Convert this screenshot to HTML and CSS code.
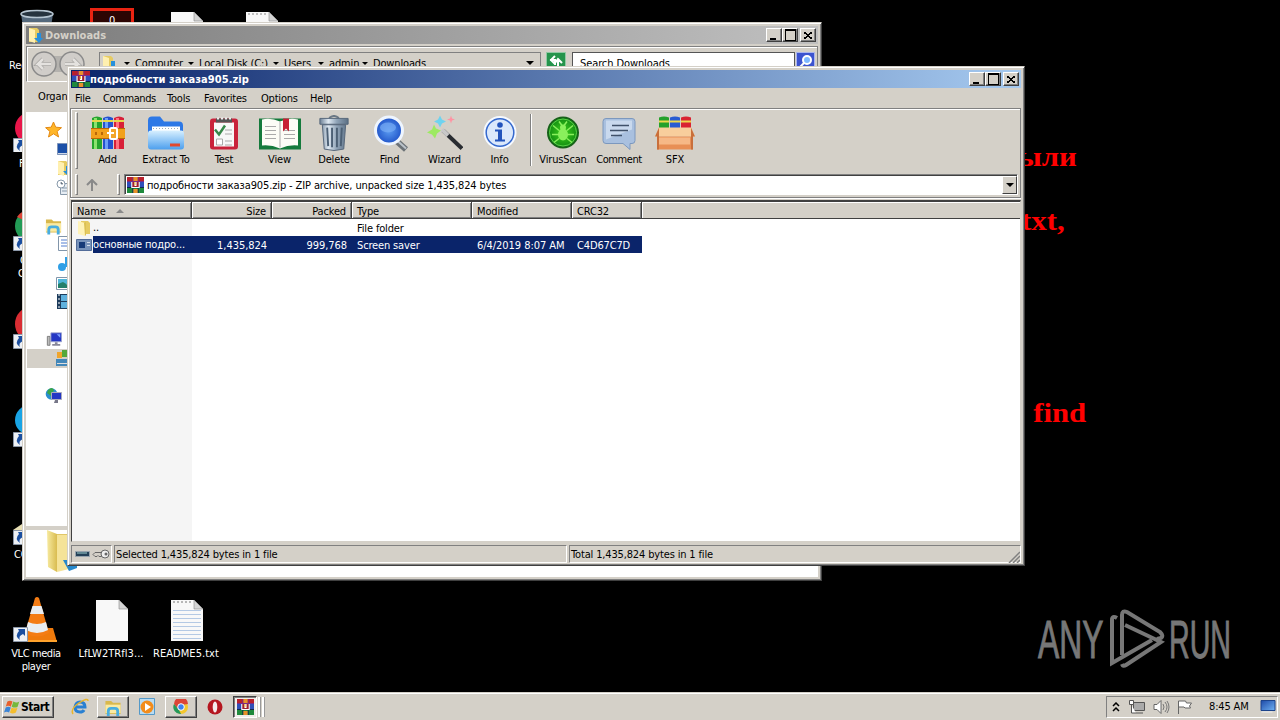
FILE: index.html
```html
<!DOCTYPE html>
<html lang="en">
<head>
<meta charset="utf-8">
<title>Desktop</title>
<link rel="stylesheet" href="styles.css">
</head>
<body>
<svg class="defs" aria-hidden="true">
<defs>
<linearGradient id="gBlue" x1="0" y1="0" x2="0" y2="1"><stop offset="0" stop-color="#d8f0ff"/><stop offset="1" stop-color="#4c9fee"/></linearGradient>
<linearGradient id="gSteel" x1="0" x2="1"><stop offset="0" stop-color="#6d8196"/><stop offset=".3" stop-color="#dfe9f2"/><stop offset=".6" stop-color="#8fa3b7"/><stop offset="1" stop-color="#5b6f84"/></linearGradient>
<linearGradient id="gFold" x1="0" x2="1"><stop offset="0" stop-color="#f7eaa0"/><stop offset="1" stop-color="#d9bc50"/></linearGradient>
<linearGradient id="gScr" x1="0" y1="0" x2="1" y2="1"><stop offset="0" stop-color="#1d4aa8"/><stop offset="1" stop-color="#6fb1f2"/></linearGradient>
<radialGradient id="gLens"><stop offset="0" stop-color="#5c9df2"/><stop offset="1" stop-color="#1f53c8"/></radialGradient>
<radialGradient id="gVirus"><stop offset="0" stop-color="#3fd21c"/><stop offset="1" stop-color="#118a12"/></radialGradient>
<symbol id="rar" viewBox="0 0 16 16"><path fill="#b8202c" d="M0 0h16v5H0z"/><path fill="#2f4fb8" d="M0 5h16v6H0z"/><path fill="#1f8a3c" d="M0 11h16v5H0z"/><path fill="#7a2a86" d="M5 0h1v5H5zM10 0h1v5h-1zM0 4h16v1H0z"/><path fill="#12264e" d="M5 5h1v11H5zM10 5h1v11h-1zM0 10h16v1H0z"/><path fill="#e8912a" d="M6 0h4v4H6zM6 12h4v4H6z"/><path fill="#fff" d="M4 5h8v6H4z"/><path fill="#a02030" d="M5 5h2v4h2V5h2v5H5z"/><path fill="#f0c040" d="M7 5h1v3H7z"/></symbol>
<symbol id="books" viewBox="0 0 34 34"><path fill="#25a52e" d="M1 2q5-3 10 0v31H1z"/><path fill="#2452cf" d="M12 2q5-3 10 0v31H12z"/><path fill="#d82038" d="M23 2q5-3 10 0v31H23z"/><path fill="#8be36f" d="M3 2h3v31H3z"/><path fill="#6da0f6" d="M14 2h3v31h-3z"/><path fill="#ff7180" d="M25 2h3v31h-3z"/><path fill="#e6d64a" d="M1 4h10v2H1zM12 4h10v2H12zM23 4h10v2H23z"/><path fill="#f2a11c" d="M0 12h34v11H0z"/><path fill="#b86708" d="M0 12h34v1H0zM0 22h34v1H0zM4 16h2v3H4zM10 16h2v3h-2z"/><rect x="19" y="12" width="7" height="11" rx="1.500" fill="#f3a52a" stroke="#fff" stroke-width="2"/><path fill="#fff" d="M16 16h7v2h-7z"/></symbol>
<symbol id="folder" viewBox="0 0 16 16"><path fill="#e6cb62" d="M5 1h7l2 2v11H5z"/><path fill="#fff3b8" d="M2 1l7 2v13l-7-2z"/><path fill="#dcc154" d="M8 3l2-1v13l-1 1z"/></symbol>
<symbol id="dlfolder" viewBox="0 0 16 16"><path fill="#e6cb62" d="M1 1h8l2 2v12H1z"/><path fill="#fff0b0" d="M1 1l6 2v13l-6-2z"/><path fill="#2790dc" d="M9 6h4v5h2l-4 5-5-5h3z"/></symbol>
<symbol id="winflag" viewBox="0 0 20 18"><path fill="#e8602b" d="M4 2q3-2 6 0L8 8Q5 6 2 8z"/><path fill="#76b83b" d="M11 2q4 2 7 0l-2 6q-3 2-7 0z"/><path fill="#3b85d6" d="M2 9q3-2 6 0l-2 6q-3-2-6 0z"/><path fill="#f4bd2d" d="M9 9q4 2 7 0l-2 6q-4 2-7 0z"/></symbol>
<symbol id="shortcut" viewBox="0 0 15 15"><path fill="#eef1f5" stroke="#8b97a8" d="M.5.5h14v14H.5z"/><path fill="#1b4fa0" d="M5 2h7v7l-2-2q-5 2-3 6-6-4-1-9z"/></symbol>
<symbol id="libs" viewBox="0 0 18 18"><path fill="#d9b84c" d="M1 2h6l2 2h8v12H1z"/><path fill="#faeaa2" d="M1 6h16v9H1z"/><path fill="none" stroke="#48ade0" stroke-width="3" d="M4 18v-5q0-3 3-3h4q3 0 3 3v5"/></symbol>
<symbol id="doc" viewBox="0 0 32 42"><path fill="#f8f8f8" d="M0 0h23l9 9v32H0z"/><path fill="#d4d4d4" stroke="#888" stroke-width=".6" d="M23 0v9h9z"/></symbol>
<symbol id="monitor" viewBox="0 0 18 16"><path fill="#bbb" stroke="#777" d="M1.500 4.500h3v10h-3z"/><path fill="#2336c4" stroke="#9ea5cc" d="M5.500.5h12v10h-12z"/><path fill="#889" d="M10 11h3v2h3v2H7v-2h3z"/><path fill="#7da0ff" d="M12 2h4v4z"/></symbol>
</defs>
</svg>

<main class="desktop">
  <svg class="at bin" width="36" height="30" viewBox="0 0 36 30"><path fill="#55697c" d="M2 5h32l-4 25H6z"/><ellipse cx="18" cy="5" rx="16" ry="3.500" fill="#27343f" stroke="#b7c6d2" stroke-width="1.500"/></svg>
  <div class="at redbox">0</div>
  <svg class="at doc-a" width="32" height="42"><use href="#doc"/></svg>
  <svg class="at doc-b" width="32" height="42"><use href="#doc"/><path stroke="#888" stroke-dasharray="2 2" d="M2 2h20"/></svg>
  <span class="at lbl l-re">Recycle Bin</span>
  <svg class="at" style="left:13px;top:108px" width="30" height="44"><circle cx="18" cy="20" r="16" fill="#e8164a"/><use href="#shortcut" y="30" width="15" height="15"/></svg>
  <span class="at lbl l-f">Firefox</span>
  <svg class="at" style="left:13px;top:206px" width="30" height="46"><circle cx="18" cy="20" r="16" fill="#239b56"/><path fill="#dd4538" d="M4 11Q9 3 19 4v14z"/><use href="#shortcut" y="30" width="15" height="15"/></svg>
  <span class="at lbl l-g">Google<br>Chrome</span>
  <svg class="at" style="left:13px;top:304px" width="30" height="46"><ellipse cx="18" cy="20" rx="16" ry="17" fill="#d92d33"/><use href="#shortcut" y="30" width="15" height="15"/></svg>
  <svg class="at" style="left:13px;top:401px" width="30" height="48"><circle cx="17" cy="19" r="15" fill="#19a4e5"/><use href="#shortcut" y="31" width="15" height="15"/></svg>
  <svg class="at" style="left:13px;top:499px" width="30" height="48"><path fill="#e8dfb4" d="M0 31l12-8v10z"/><use href="#shortcut" y="31" width="15" height="15"/></svg>
  <span class="at lbl l-c">CCleaner</span>

  <svg class="at" style="left:13px;top:595px" width="46" height="50" viewBox="0 0 46 50"><path fill="#ef7a0c" d="M10 33h30l4 14H8z"/><path fill="#ffa22c" d="M8 45h36v2H8z"/><path fill="#f47c14" d="M22 3q2-2 4 0l10 35q-12 7-24 0z"/><path fill="#e9edf1" d="M19.500 11h9l2.500 8H17zM15 27q9 4 18 0l2 8q-11 6-22 0z"/><use href="#shortcut" y="32" width="15" height="15"/></svg>
  <span class="at lbl l-vlc">VLC media<br>player</span>
  <svg class="at" style="left:96px;top:600px" width="32" height="42"><use href="#doc"/></svg>
  <span class="at lbl l-lf">LfLW2TRfl3...</span>
  <svg class="at" style="left:171px;top:600px" width="32" height="42"><use href="#doc"/><path stroke="#777" stroke-dasharray="2 2" d="M2 2h20"/><path stroke="#b4c9e4" d="M2 10.500h28M2 14.500h28M2 18.500h28M2 22.500h28M2 26.500h28M2 30.500h28M2 34.500h28M2 38.500h28"/></svg>
  <span class="at lbl l-rd">README5.txt</span>

  <b class="at wall w1">были</b>
  <b class="at wall w2">txt,</b>
  <b class="at wall w3">find</b>

  <div class="at brand"><span class="any">ANY</span><svg width="56" height="64" viewBox="0 0 56 64" fill="none" stroke="#777" stroke-width="4"><path d="M8 10Q3 7 3 12v43l40-23"/><path d="M13 47V7q0-5 5-3l33 20q4 4 1 6l-4 1M16 17l36 17-35 23q-3 2-4-1"/></svg><span class="run">RUN</span></div>

  <section class="window back">
    <header class="title inactive"><svg width="16" height="16"><use href="#dlfolder"/></svg><b>Downloads</b>
      <span class="ctl"><i class="min"></i><i class="max"></i><i class="cls"></i></span></header>
    <div class="nav">
      <svg class="arrows" width="58" height="28" viewBox="0 0 58 28"><rect x="14" y="6" width="30" height="16" fill="#b4b2ae"/><g fill="#d0cdc9" stroke="#8a8a8a" stroke-width="1.500"><circle cx="14" cy="14" r="12"/><circle cx="42" cy="14" r="12"/></g><path fill="none" stroke="#a8a6a3" stroke-width="4" d="M21 14H8l5-5m-5 5l5 5M35 14h13l-5-5m5 5l-5 5"/><path fill="none" stroke="#e4e2df" stroke-width="2.500" d="M21 14H8l5-5m-5 5l5 5M35 14h13l-5-5m5 5l-5 5"/></svg>
      <div class="crumbs"><svg width="16" height="16"><use href="#dlfolder"/></svg><i class="dn"></i><span class="c1">Computer</span><i class="dn"></i><span class="c2">Local Disk (C:)</span><i class="dn"></i><span class="c3">Users</span><i class="dn"></i><span class="c4">admin</span><i class="dn"></i><span class="c5">Downloads</span><i class="dn last"></i></div>
      <svg class="refresh" width="20" height="20"><path fill="#25944c" stroke="#8fc9a3" d="M.5.5h19v19H.5z"/><path stroke="#fff" stroke-width="2" fill="none" d="M9 4L5 8l4 4M4 8h5v5M12 14V8m-3 3l3-4 4 4"/></svg>
      <div class="search">Search Downloads</div>
      <svg width="19" height="20"><path fill="#3c53cf" stroke="#a9b4ef" d="M.5.5h18v19H.5z"/><circle cx="11" cy="8" r="4" fill="#7fb8ff" stroke="#fff" stroke-width="2"/><path stroke="#fff" stroke-width="2" d="M8 11l-4 4"/></svg>
    </div>
    <div class="organize">Organize</div>
    <div class="tree">
      <svg width="40" height="414" viewBox="27 112 40 414">
        <path fill="#ffb629" stroke="#e48a14" d="M53.500 122l2.200 5.200 5.800.5-4.400 3.700 1.500 5.600-5.100-3.200-5 3.200 1.400-5.600-4.300-3.700 5.600-.5z"/>
        <path fill="#1c50a8" stroke="#7d93b8" d="M57.500 143.500h14v11h-14z"/><path stroke="#cfd9e8" d="M58 153.500h14"/>
        <use href="#dlfolder" x="57" y="160" width="16" height="16"/>
        <path fill="#e6edf4" stroke="#8799aa" d="M60.500 183.500h12v11h-12z"/><circle cx="61" cy="184" r="4" fill="#fff" stroke="#8799aa"/><path stroke="#8799aa" d="M61 182v2h2M62 188h5M62 191h5"/>
        <use href="#libs" x="45" y="217" width="17" height="18"/>
        <path fill="#fff" stroke="#8195aa" d="M58.500 236.500h12v14h-12z"/><path stroke="#557fd0" d="M61 240h6M61 243h6M61 246h6"/>
        <circle cx="62" cy="267" r="4" fill="#2f9fe6"/><path stroke="#2f9fe6" stroke-width="2" d="M66 257v10"/>
        <path fill="#fff" stroke="#8195aa" d="M56.500 277.500h14v12h-14z"/><path fill="#4fb6d8" d="M58 279h10v5H58z"/><path fill="#24806a" d="M58 284l5-2 5 3v3H58z"/>
        <path fill="#1d3c5c" d="M57 294h14v15H57z"/><path fill="#5fb1dd" d="M61 295h8v6h-8zM61 302h8v6h-8z"/><path stroke="#fff" stroke-dasharray="2 2" d="M59 294v15"/>
        <use href="#monitor" x="46" y="332" width="16" height="15"/>
        <path fill="#d4d0c8" d="M27 349h40v19H27z"/><path fill="#4387b9" d="M56 359h11v7H56z"/><path fill="#f0a52c" d="M57 352h5v6h-5z"/><path fill="#54a83c" d="M62 350h5v7h-5z"/><path fill="#ddd" d="M57 363h10v1H57z"/>
        <circle cx="51.500" cy="394" r="5.800" fill="#2a8ed0"/><path fill="#3aa54a" d="M48 390q4-4 6 0l-3 6-4-3z"/><path fill="#2336c4" stroke="#aab" d="M51.500 392.500h10v7h-10z"/><path fill="#778" d="M55 400h3v3h-4z"/>
      </svg>
    </div>
    <div class="details"><svg width="50" height="46" viewBox="0 0 50 46"><path fill="#e0c667" d="M26 4h24v34H30z"/><path fill="url(#gFold)" d="M20 0l10 4v38l-9-5z"/><path fill="#f5e398" d="M30 5h12v34l-12 3z"/><path fill="#2688cc" d="M36 30h14v8l-8 3z"/></svg></div>
  </section>

  <section class="window front">
    <header class="title active"><svg width="18" height="16" viewBox="0 0 16 16" preserveAspectRatio="none"><use href="#rar"/></svg><b>подробности заказа905.zip</b>
      <span class="ctl"><i class="min"></i><i class="max"></i><i class="cls"></i></span></header>
    <nav class="menu"><span style="width:28px">File</span><span class="tight" style="width:64px">Commands</span><span style="width:37px">Tools</span><span style="width:57px">Favorites</span><span style="width:49px">Options</span><span>Help</span></nav>
    <div class="bars">
      <div class="tools">
        <i class="grip"></i>
        <div class="tool" style="width:59px"><svg width="36" height="36"><use href="#books" x="1" y="1" width="34" height="34"/></svg><span>Add</span></div>
        <div class="tool" style="width:58px"><svg width="38" height="36" viewBox="0 0 38 36"><path fill="#2d78e6" d="M1 5q0-4 4-4h8l4 5h15q4 0 4 4v20H1z"/><path fill="#fff" d="M5 11h28v8H5z"/><path stroke="#9ab" stroke-dasharray="1 2" d="M6 13h26"/><rect x="1" y="15" width="36" height="19" rx="3" fill="url(#gBlue)"/><path fill="#e2482e" d="M23 28h10v3H23z"/></svg><span>Extract To</span></div>
        <div class="tool" style="width:58px"><svg width="30" height="36" viewBox="0 0 30 36"><rect x="1" y="3" width="28" height="31" rx="3" fill="#c9233b"/><path fill="#f8f8f8" d="M5 7h20v24H5z"/><path fill="#555" d="M7 3h16v4H7z"/><path stroke="#eee" stroke-dasharray="2 2" stroke-width="2" d="M8 3h15"/><path fill="none" stroke="#37884a" stroke-width="2.500" d="M6 14l4 5 6-9"/><path stroke="#aaa" d="M16 14.500h7M16 18.500h7M16 25.500h7M16 29.500h7"/><path fill="#fff" stroke="#aaa" d="M7.500 23.500h6v6h-6z"/></svg><span>Test</span></div>
        <div class="tool" style="width:53px"><svg width="44" height="36" viewBox="0 0 44 36"><path fill="#157a3c" d="M1 3h42v31H1z"/><path fill="#fcfcf6" d="M4 4q9-2 18 2 9-4 18-2v26q-9-1-18 3-9-4-18-3z"/><path stroke="#aaa" d="M22 6v26M7 11h11M7 15h11M7 19h11M7 23h11M26 19h11M26 23h11M26 15h11"/><path fill="#c71f35" d="M25 3h6v13l-3-3-3 3z"/></svg><span>View</span></div>
        <div class="tool" style="width:56px"><svg width="32" height="38" viewBox="0 0 32 38"><path fill="none" stroke="#6a7885" stroke-width="2" d="M11 3q5-4 10 0"/><path fill="url(#gSteel)" stroke="#56677a" d="M1.500 3.500h29v6h-29zM4 10h24l-2 25q-10 3-20 0z"/><path stroke="#4c6075" stroke-width="2" d="M9 13l1 19M14 13v20M19 13v20M24 13l-1 19"/></svg><span>Delete</span></div>
        <div class="tool" style="width:55px"><svg width="38" height="36" viewBox="0 0 38 36"><path stroke="#6c7277" stroke-width="6" d="M25 25l10 9"/><path stroke="#bbc3ca" stroke-width="2" d="M25 24l10 9"/><circle cx="18" cy="15" r="13.500" fill="url(#gLens)" stroke="#eef5ff" stroke-width="3"/><ellipse cx="17" cy="12" rx="8" ry="5" fill="#78adf5" opacity=".7"/></svg><span>Find</span></div>
        <div class="tool" style="width:55px"><svg width="36" height="36" viewBox="0 0 36 36"><path stroke="#292c31" stroke-width="4" d="M16 15l19 18"/><path stroke="#c8c8c8" stroke-width="4" d="M15 14l6 6"/><path fill="#9dea62" d="M7 9l2 4 5 2-4 3-2 5-3-4-5-2 5-3z"/><path fill="#6ed3f0" d="M13 0l2 4 4 2-4 2-2 4-2-4-4-2 4-2z"/><path fill="#ff93a3" d="M24 0l1 3 3 1-3 1-1 3-1-3-3-1 3-1z"/></svg><span>Wizard</span></div>
        <div class="tool info" style="width:55px"><svg width="36" height="36" viewBox="0 0 36 36"><circle cx="18" cy="17" r="15.500" fill="#e7effb" stroke="#f5f9ff" stroke-width="2"/><circle cx="18" cy="17" r="13.800" fill="#dbe8fb" stroke="#3569ce" stroke-width="1.500"/><circle cx="18" cy="9.500" r="2.800" fill="#2253bc"/><path fill="#2253bc" d="M13 14h7v10h3v2H13v-2h3v-8h-3z"/></svg><span>Info</span></div>
        <i class="split"></i>
        <div class="tool" style="width:60px"><svg width="34" height="36" viewBox="0 0 34 36"><circle cx="17" cy="17" r="15" fill="url(#gVirus)" stroke="#176219" stroke-width="2"/><circle cx="17" cy="17" r="13.500" fill="none" stroke="#58d247"/><ellipse cx="17" cy="19" rx="5" ry="6" fill="#89f05c"/><circle cx="17" cy="12" r="3" fill="#89f05c"/><path fill="none" stroke="#89f05c" stroke-width="1.500" d="M7 10l6 5M27 10l-6 5M6 19h22M8 27l5-4M26 27l-5-4M13 6l3 4M21 6l-3 4"/></svg><span>VirusScan</span></div>
        <div class="tool" style="width:52px"><svg width="34" height="36" viewBox="0 0 34 36"><path fill="#a9c0df" stroke="#7c98be" d="M4 3h26q3 0 3 3v19q0 3-3 3h-2v6l-7-6H4q-3 0-3-3V6q0-3 3-3z"/><path fill="#c9d9ee" d="M4 5h26v9L4 24z"/><path stroke="#40516a" stroke-width="1.500" d="M10 10h17M8 15h18M9 20h11"/></svg><span class="tight">Comment</span></div>
        <div class="tool" style="width:60px"><svg width="42" height="36" viewBox="0 0 42 36"><path fill="#24a12b" d="M5 2q5-2 10 0v16H5z"/><path fill="#285bd2" d="M16 2q5-2 10 0v16H16z"/><path fill="#d92332" d="M27 2q5-2 10 0v16H27z"/><path fill="#eed84c" d="M5 5h10v2H5zM16 5h10v2H16zM27 5h10v2H27z"/><path fill="#f8ce9c" d="M5 12h32l4 9H1z"/><path fill="#e88f55" d="M3 21h36v13H3z"/><path fill="#c96f3b" d="M5 12L1 21h2v13h2zM37 12l4 9h-2v13h-2z"/><path fill="#f6b886" d="M5 22h31v7H5z"/></svg><span>SFX</span></div>
      </div>
      <div class="addr">
        <i class="grip"></i>
        <svg class="up" width="14" height="12" viewBox="0 0 14 12"><path fill="none" stroke="#898989" stroke-width="2" d="M7 12V2M2 6l5-5 5 5"/></svg>
        <i class="grip"></i>
        <div class="path"><svg width="17" height="16" viewBox="0 0 16 16" preserveAspectRatio="none"><use href="#rar"/></svg><span>подробности заказа905.zip - ZIP archive, unpacked size 1,435,824 bytes</span><i class="drop"></i></div>
      </div>
    </div>
    <div class="list">
      <div class="row head"><span>Name<svg width="8" height="4"><path fill="#8a8a8a" d="M0 4l4-4 4 4z"/></svg></span><span class="r">Size</span><span class="r">Packed</span><span>Type</span><span>Modified</span><span>CRC32</span><span></span></div>
      <div class="row"><span><svg width="16" height="16"><use href="#folder"/></svg>..</span><span></span><span></span><span>File folder</span></div>
      <div class="row sel"><span class="nm"><svg width="16" height="14"><path fill="#7893ba" stroke="#526c99" d="M.5 1.500h15v11H.5z"/><path fill="#173b78" d="M3 4h6v6H3z"/><path stroke="#d3ddeb" d="M11 4.500h3M11 7.500h3"/></svg><em>основные подро...</em></span><span class="r num">1,435,824</span><span class="r num">999,768</span><span>Screen saver</span><span class="num">6/4/2019 8:07 AM</span><span>C4D67C7D</span></div>
      <div class="shade"></div>
    </div>
    <footer class="status"><div class="s0"><svg width="36" height="12" viewBox="0 0 36 12"><path fill="#244158" stroke="#99a4ae" d="M.5 3.500h14v5H.5z"/><path stroke="#9fd0d0" d="M2 5h10"/><path fill="none" stroke="#666" d="M27 4.500h-7l-2 2 2 2h2l1-1 1 1h3"/><circle cx="30" cy="6" r="4" fill="#eee" stroke="#666"/><circle cx="31" cy="6" r="1.500" fill="#666"/></svg></div><div class="s1">Selected 1,435,824 bytes in 1 file</div><div class="s2">Total 1,435,824 bytes in 1 file<svg width="12" height="12"><path stroke="#808080" stroke-width="1.500" d="M1 12L12 1M5 12l7-7M9 12l3-3"/></svg></div></footer>
  </section>
</main>

<footer class="taskbar">
  <div class="start"><svg width="17" height="17" viewBox="0 0 20 18"><use href="#winflag"/></svg><b>Start</b></div>
  <svg class="ie" width="18" height="18" viewBox="0 0 18 18"><path fill="none" stroke="#2a80d2" stroke-width="3" d="M4 9h10q0-5-5-5-4 0-5 5 0 5 5 5 3 0 4-2"/><path fill="none" stroke="#e9b52c" stroke-width="1.500" d="M2 16Q-1 11 8 5t9-2"/></svg>
  <div class="task"><svg width="18" height="17"><use href="#libs"/></svg></div>
  <svg class="wmp" width="17" height="18" viewBox="0 0 17 18"><path fill="#b9dcf3" stroke="#5499c8" d="M.5.5h15v16H.5z"/><circle cx="8" cy="9" r="6.500" fill="#f28c1b"/><path fill="#fff" d="M6 5l6 4-6 4z"/></svg>
  <div class="task"><svg width="16" height="16" viewBox="0 0 16 16"><circle cx="8" cy="8" r="7" fill="#f4c72d"/><path fill="#dc4437" d="M1 5a7 7 0 0 1 14 0l-7 1-3 4z"/><path fill="#24985a" d="M1 5l5 6 2 4A7 7 0 0 1 1 5z"/><circle cx="8" cy="8" r="3.300" fill="#3e82f0" stroke="#fff"/></svg></div>
  <svg class="opera" width="16" height="16" viewBox="0 0 16 16"><circle cx="8" cy="8" r="7.500" fill="#b5161f"/><ellipse cx="8" cy="8" rx="2.300" ry="5.500" fill="#f5eaea"/></svg>
  <div class="task on"><svg width="17" height="16" viewBox="0 0 16 16" preserveAspectRatio="none"><use href="#rar"/></svg></div><i class="tick"></i><i class="tick"></i>
  <div class="tray">
    <svg width="8" height="10" viewBox="0 0 8 10"><path fill="none" stroke="#000" stroke-width="1.500" d="M1 4l3-3 3 3M1 9l3-3 3 3"/></svg>
    <svg class="net" width="16" height="15" viewBox="0 0 16 15"><path fill="#aaa" stroke="#555" d="M4.500 3.500h11v8h-11zM7 14h7"/><path fill="#fff" stroke="#555" d="M.5 1.500h4v4h-4zM2.500 6v8H7"/></svg>
    <svg class="vol" width="17" height="14" viewBox="0 0 17 14"><path fill="#fff" stroke="#666" d="M1 4.500h3l4-4v13l-4-4H1z"/><path fill="none" stroke="#777" d="M10 4q2 3 0 6M12 2q4 5 0 10M14 1q4 6 0 12"/></svg>
    <svg class="flag" width="16" height="14" viewBox="0 0 16 14"><path fill="#fff" stroke="#666" d="M1.500 14V1h7l1 2h5l-2 3 1 2H8L7 7H2"/></svg>
    <span class="clock">8:45 AM</span>
    <svg class="show" width="16" height="13" viewBox="0 0 15 13"><path fill="url(#gScr)" stroke="#1c438b" d="M.5.5h14v10H.5z"/><path stroke="#eee" d="M1 12h11"/></svg>
  </div>
</footer>
</body>
</html>
```
FILE: styles.css
```css
* { box-sizing: border-box; }
body { margin: 0; width: 1280px; height: 720px; overflow: hidden; background: #000; color: #000; font: 11px/13px "DejaVu Sans Condensed", "DejaVu Sans", sans-serif; letter-spacing: -0.15px; display: flex; flex-direction: column; white-space: nowrap; }
svg { display: block; flex: none; }
.defs { position: absolute; width: 0; height: 0; }
.desktop { position: relative; flex: 1; overflow: hidden; }
.at { position: absolute; }
.lbl { color: #fff; text-align: center; }
.tight { letter-spacing: -0.4px; }
.num { letter-spacing: -0.05px; }
.bin { left: 19px; top: 9px; }
.redbox { left: 90px; top: 8px; width: 44px; height: 40px; border: 3px solid #e92412; background: #2c0503; color: #fff; text-align: center; line-height: 19px; }
.doc-a { left: 171px; top: 12px; }
.doc-b { left: 246px; top: 12px; }
.l-re { left: 9px; top: 59px; }
.l-f { left: 19px; top: 157px; }
.l-g { left: 18px; top: 254px; }
.l-c { left: 14px; top: 548px; }
.l-vlc { left: 0; top: 647px; width: 72px; letter-spacing: -0.4px; }
.l-lf { left: 72px; top: 647px; width: 78px; letter-spacing: 0.05px; }
.l-rd { left: 147px; top: 647px; width: 78px; letter-spacing: 0.05px; }
.wall { color: #f00; font: bold 28px/32px "Liberation Serif", serif; letter-spacing: 0; transform: scaleX(1.1); transform-origin: 100% 50%; }
.w1 { right: 203px; top: 141px; }
.w2 { right: 215px; top: 205px; }
.w3 { right: 194px; top: 397px; }
.brand { left: 1038px; top: 608px; display: flex; align-items: center; color: #777; font: 53px/64px "Liberation Sans", sans-serif; letter-spacing: 0; -webkit-text-stroke: 1px #777; }
.brand span { display: block; width: 70px; transform-origin: 0 50%; transform: scaleX(.6); }
.brand svg { margin-left: 1px; }
.brand .run { margin-left: 4px; transform: scaleX(.54); }

.window { position: absolute; background: #d4d0c8; border: 1px solid; border-color: #d4d0c8 #404040 #404040 #d4d0c8; box-shadow: inset 1px 1px #fff, inset -1px -1px #808080; padding: 3px; display: flex; flex-direction: column; }
.back { left: 22px; top: 22px; width: 800px; height: 559px; }
.front { left: 67px; top: 66px; width: 958px; height: 500px; padding-bottom: 2px; }
.title { height: 18px; flex: none; display: flex; align-items: center; gap: 1px; padding: 0 2px; font-size: 11px; letter-spacing: 0; }
.active { gap: 0; padding-left: 1px; letter-spacing: 0.08px; }
.inactive { background: linear-gradient(90deg, #7c7c7c, #c0c0c0); color: #d4d0c8; }
.active { background: linear-gradient(90deg, #0a246a, #a6caf0); color: #fff; }
.ctl { margin-left: auto; display: flex; }
.ctl i { width: 16px; height: 14px; background: #d4d0c8; border: 1px solid; border-color: #fff #404040 #404040 #fff; box-shadow: inset -1px -1px #808080; display: grid; place-items: center; }
.ctl i::before { content: ""; width: 8px; height: 9px; }
.ctl .min::before { width: 6px; height: 2px; background: #000; margin: 7px 3px 0 0; }
.ctl .max::before { border: 1px solid #000; border-top-width: 2px; width: 9px; height: 9px; }
.ctl .cls { margin-left: 2px; }
.ctl .cls::before { width: 8px; height: 7px; background: linear-gradient(41deg, transparent 42%, #000 42% 58%, transparent 58%), linear-gradient(-41deg, transparent 42%, #000 42% 58%, transparent 58%); }

.nav { height: 36px; flex: none; margin-top: 2px; padding: 5px 1px 0 3px; border: 1px solid #808080; border-bottom-color: #fff; box-shadow: inset 1px 1px #fff; display: flex; align-items: flex-start; }
.arrows { margin-top: -2px; }
.crumbs { width: 442px; height: 22px; margin-left: 11px; padding-left: 2px; border: 1px solid #808080; display: flex; align-items: center; }
.dn { border: 3px solid transparent; border-top-color: #000; border-bottom: 0; margin-right: 5px; }
.dn.last { margin-left: auto; margin-right: 6px; border-width: 4px 4px 0; }
.crumbs svg + .dn { margin-left: 6px; }
.c1 { width: 53px; }
.c2 { width: 74px; }
.c3 { width: 34px; }
.c4 { width: 33px; }
.refresh { margin-left: 5px; }
.search { width: 223px; height: 22px; margin: 0 1px 0 6px; border: 1px solid #555; background: #fff; padding: 4px 7px; letter-spacing: -0.1px; }
.organize { height: 30px; flex: none; width: 41px; overflow: hidden; padding: 8px 0 0 12px; }
.tree { height: 414px; flex: none; background: #fff; padding-left: 1px; overflow: hidden; }
.details { flex: 1; border-top: 4px solid #d4d0c8; background: #fff; padding-left: 1px; }

.menu { height: 20px; flex: none; display: flex; align-items: center; padding: 0 4px; letter-spacing: -0.2px; }
.bars { height: 90px; flex: none; border: 1px solid #808080; box-shadow: inset 1px 1px #fff, 0 1px #fff; margin-left: -1px; }
.tools { display: flex; height: 62px; padding: 3px 0 0 4px; }
.grip { width: 3px; border: 1px solid; border-color: #fff #808080 #808080 #fff; flex: none; }
.tools .grip { height: 57px; }
.tool { display: flex; flex-direction: column; align-items: center; padding-top: 3px; }
.tool svg { height: 37px; }
.tool span { margin-top: 1px; }
.split { width: 2px; height: 52px; border-left: 1px solid #808080; border-right: 1px solid #fff; margin: 2px 1px 0 3px; }
.addr { display: flex; align-items: center; height: 23px; padding-left: 4px; padding-right: 2px; margin-top: 2px; }
.addr .grip { height: 21px; }
.up { margin: 0 18px 0 7px; }
.path { flex: 1; height: 21px; margin-left: 4px; background: #fff; border: 1px solid; border-color: #808080 #fff #fff #808080; box-shadow: inset 1px 1px #404040; display: flex; align-items: center; padding: 0 0 0 2px; }
.path span { margin: 1px 0 0 3px; letter-spacing: -0.12px; }
.drop { margin-left: auto; width: 15px; height: 18px; background: #d4d0c8; border: 1px solid; border-color: #fff #404040 #404040 #fff; display: grid; place-items: center; }
.drop::before { content: ""; border: 4px solid transparent; border-top-color: #000; border-bottom: 0; }

.list { flex: 1; margin-top: 2px; border: 1px solid #808080; border-top: 2px solid #404040; border-left-color: #404040; border-right-color: #d4d0c8; border-bottom-color: #d4d0c8; background: #fff; display: flex; flex-direction: column; }
.row { height: 17px; flex: none; display: grid; grid-template-columns: 120px 80px 80px 120px 100px 70px 1fr; line-height: 17px; }
.row > span { padding: 1px 5px 0; display: flex; align-items: center; height: 17px; }
.row > span.r { justify-content: flex-end; }
.head { background: #d4d0c8; }
.head > span { padding-top: 2px; border-right: 1px solid #404040; border-bottom: 1px solid #404040; box-shadow: inset 1px 1px #fff, inset -1px -1px #808080; }
.head > span:last-child { border-right: 0; box-shadow: inset 1px 1px #fff; }
.head svg { margin-left: 10px; }
.row:not(.head) > span:first-child { background: #f5f5f5; padding: 0 0 0 4px; gap: 1px; }
.sel > span:not(.nm) { background: #0a246a; color: #fff; }
.nm em { font-style: normal; background: #0a246a; color: #fff; flex: 1; height: 17px; padding-top: 1px; line-height: 16px; }
.shade { width: 120px; flex: 1; background: #f5f5f5; }
.status { height: 18px; flex: none; display: flex; gap: 2px; margin-top: 3px; }
.status > div { border: 1px solid; border-color: #808080 #fff #fff #808080; display: flex; align-items: center; height: 18px; }
.s0 { width: 41px; padding-left: 3px; }
.s1 { width: 453px; padding-left: 1px; }
.s2 { flex: 1; padding-left: 1px; }
.s2 svg { margin: 5px 0 0 auto; }

.taskbar { height: 28px; flex: none; background: #d4d0c8; box-shadow: inset 0 1px #fff; border-top: 1px solid #d4d0c8; display: flex; align-items: center; padding-left: 2px; }
.start, .task { height: 22px; border: 1px solid; border-color: #fff #404040 #404040 #fff; box-shadow: inset -1px -1px #808080; display: flex; align-items: center; justify-content: center; margin-top: 1px; }
.start { width: 52px; font-size: 12px; letter-spacing: -.5px; justify-content: flex-start; padding-left: 1px; }
.ie { margin-left: 17px; }
.task { width: 32px; margin-left: 8px; }
.wmp { margin-left: 10px; }
.wmp + .task { margin-left: 9px; }
.opera { margin: 0 10px 0 10px; }
.task.on { width: 24px; margin-left: 0; border-color: #404040 #fff #fff #404040; box-shadow: inset 1px 1px #808080; background: #f0eeea; }
.tick { width: 3px; height: 20px; margin-left: 1px; background: #fff; border-right: 1px solid #999; }
.tray { margin-left: auto; width: 172px; height: 22px; margin-right: 2px; border: 1px solid; border-color: #808080 #fff #fff #808080; display: flex; align-items: center; padding-left: 5px; }
.net { margin-left: 9px; }
.vol { margin-left: 8px; }
.flag { margin-left: 7px; }
.clock { margin-left: 16px; }
.show { margin-left: auto; margin-right: 1px; }
```
